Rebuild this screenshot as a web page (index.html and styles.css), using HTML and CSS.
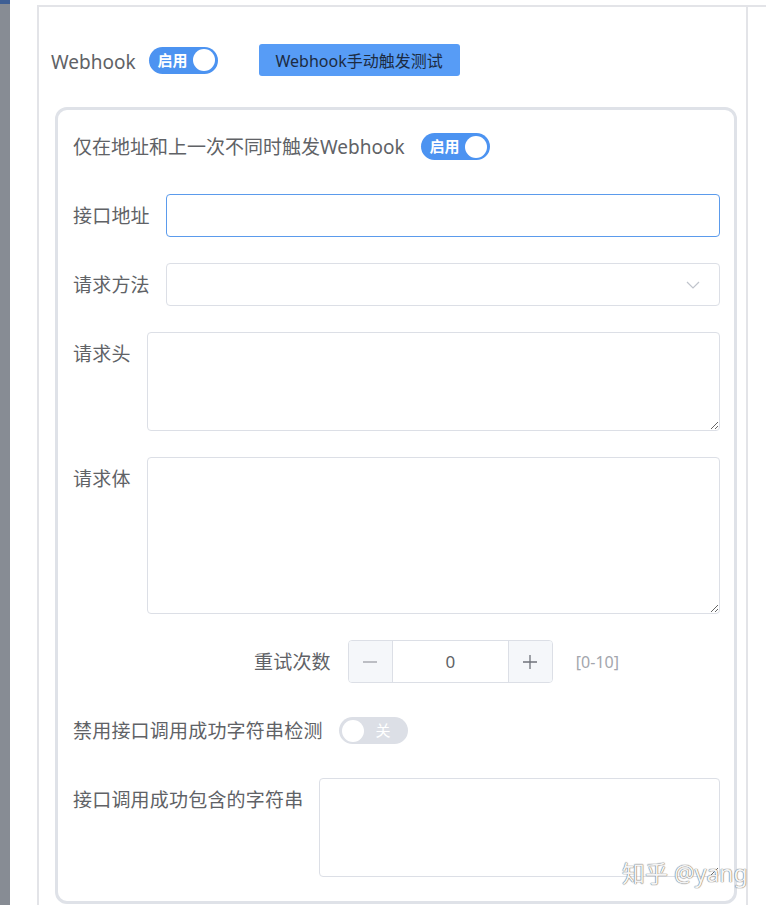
FILE: index.html
```html
<!DOCTYPE html>
<html lang="zh">
<head>
  <meta charset="UTF-8" />
  <title>Webhook</title>
  <link rel="stylesheet" href="styles.css">
</head>
<body>
  <div class="page">
    <div class="sidebar"></div>
    <div class="main">
      <div class="frame">
        <div class="top-row">
          <span class="label">Webhook</span>
          <span class="switch on"><span class="switch-text">启用</span><span class="knob"></span></span>
          <button type="button" class="test-button">Webhook手动触发测试</button>
        </div>

        <div class="card">
          <div class="form-item">
            <span class="label">仅在地址和上一次不同时触发Webhook</span>
            <span class="switch on"><span class="switch-text">启用</span><span class="knob"></span></span>
          </div>

          <div class="form-item">
            <span class="label cjk">接口地址</span>
            <input type="text" class="text-input focused" />
          </div>

          <div class="form-item">
            <span class="label cjk">请求方法</span>
            <div class="select">
              <svg width="14" height="8" viewBox="0 0 14 8"><path d="M1 1 L7 7 L13 1" fill="none" stroke="#c0c4cc" stroke-width="1.2"/></svg>
            </div>
          </div>

          <div class="form-item">
            <span class="label cjk">请求头</span>
            <textarea class="textarea short"></textarea>
          </div>

          <div class="form-item">
            <span class="label cjk">请求体</span>
            <textarea class="textarea tall"></textarea>
          </div>

          <div class="form-item retry">
            <span class="label cjk">重试次数</span>
            <div class="number">
              <span class="num-btn minus">
                <svg width="16" height="16" viewBox="0 0 16 16"><path d="M1 8 H15" stroke="#a8abb2" stroke-width="1.3"/></svg>
              </span>
              <span class="num-value">0</span>
              <span class="num-btn plus">
                <svg width="16" height="16" viewBox="0 0 16 16"><path d="M1 8 H15 M8 1 V15" stroke="#6f737b" stroke-width="1.3"/></svg>
              </span>
            </div>
            <span class="hint">[0-10]</span>
          </div>

          <div class="form-item">
            <span class="label cjk">禁用接口调用成功字符串检测</span>
            <span class="switch off"><span class="switch-text">关</span><span class="knob"></span></span>
          </div>

          <div class="form-item">
            <span class="label cjk">接口调用成功包含的字符串</span>
            <textarea class="textarea short"></textarea>
          </div>
        </div>
      </div>
    </div>
    <div class="watermark">知乎 @yang</div>
  </div>
</body>
</html>
```

FILE: styles.css
```css
* {
  box-sizing: border-box;
}

body {
  margin: 0;
  background: #fff;
  font-family: "Noto Sans", "Noto Sans CJK SC", sans-serif;
  color: #606266;
  overflow: hidden;
}

.page {
  position: relative;
  display: flex;
  height: 905px;
}

.sidebar {
  width: 10px;
  background: #878c94;
  border-top: 4px solid #3f5f94;
}

.main {
  flex: 1;
  padding-top: 5px;
  display: flex;
  flex-direction: column;
}

.frame {
  flex: 1;
  margin-left: 27px;
  width: 711px;
  border-top: 2px solid #e3e4e8;
  border-left: 2px solid #e3e4e8;
  border-right: 2px solid #e3e4e8;
  padding: 37px 0 0 12px;
  position: relative;
}

.frame::before {
  content: "";
  position: absolute;
  top: -2px;
  left: 709px;
  width: 20px;
  border-top: 2px solid #e3e4e8;
}

.label {
  font-size: 19px;
  line-height: 41px;
  padding-top: 2px;
  white-space: nowrap;
}

.label.cjk {
  letter-spacing: 0.2px;
}

.top-row {
  display: flex;
  align-items: center;
  height: 32px;
}

.top-row .label {
  line-height: 32px;
  padding-top: 3px;
}

.top-row .switch {
  margin-left: 13px;
}

.test-button {
  margin-left: 41px;
  height: 32px;
  width: 201px;
  padding: 0;
  border: none;
  border-radius: 3px;
  background: #579cf6;
  color: #1c2b42;
  font-family: "Noto Sans", "Noto Sans CJK SC", sans-serif;
  font-size: 16px;
}

.switch {
  display: inline-flex;
  align-items: center;
  justify-content: space-between;
  width: 69px;
  height: 27px;
  border-radius: 14px;
  flex-shrink: 0;
}

.switch.on {
  background: #4c93f1;
  padding: 0 3px 0 9px;
}

.switch.off {
  background: #dcdfe6;
  flex-direction: row-reverse;
  padding: 0 17px 0 3px;
}

.switch-text {
  color: #fff;
  font-size: 15px;
  font-weight: bold;
  line-height: 27px;
}

.switch.off .switch-text {
  font-weight: normal;
}

.knob {
  width: 22px;
  height: 22px;
  border-radius: 50%;
  background: #fff;
}

.card {
  margin: 31px 0 0 4px;
  width: 682px;
  border: 3px solid #dfe2e8;
  border-radius: 12px;
  padding: 15px 14px 24px 15px;
  display: flex;
  flex-direction: column;
  gap: 26px;
}

.form-item {
  display: flex;
  align-items: flex-start;
  gap: 16px;
  min-height: 43px;
}

.form-item .switch {
  margin-top: 8px;
}

.text-input,
.select,
.textarea {
  flex: 1;
  border: 1px solid #dcdfe6;
  border-radius: 4px;
  background: #fff;
  font-family: inherit;
  font-size: 16px;
}

.text-input {
  height: 43px;
  padding: 0 14px;
}

.text-input.focused {
  border-color: #5b9bec;
  outline: none;
}

.select {
  height: 43px;
  display: flex;
  align-items: center;
  justify-content: flex-end;
  padding-right: 19px;
}

.textarea {
  padding: 6px 14px;
  margin: 0;
  resize: vertical;
}

.textarea.short {
  height: 99px;
}

.textarea.tall {
  height: 157px;
}

.retry {
  padding-left: 181px;
  align-items: center;
}

.retry .number {
  margin-left: 1px;
}

.number {
  display: flex;
  width: 205px;
  height: 43px;
  border: 1px solid #dcdfe6;
  border-radius: 4px;
  overflow: hidden;
}

.num-btn {
  width: 44px;
  background: #f5f7fa;
  display: flex;
  align-items: center;
  justify-content: center;
}

.num-btn.minus {
  border-right: 1px solid #dcdfe6;
}

.num-btn.plus {
  border-left: 1px solid #dcdfe6;
}

.num-value {
  flex: 1;
  text-align: center;
  line-height: 41px;
  font-size: 17px;
  color: #606266;
}

.hint {
  margin-left: 7px;
  font-size: 16px;
  color: #a3a6ad;
}

.watermark {
  position: absolute;
  left: 622px;
  top: 855px;
  font-size: 23px;
  color: #f4f4f4;
  text-shadow: 0 0 1px #666, 0 0 1px #666;
  white-space: nowrap;
}
```
